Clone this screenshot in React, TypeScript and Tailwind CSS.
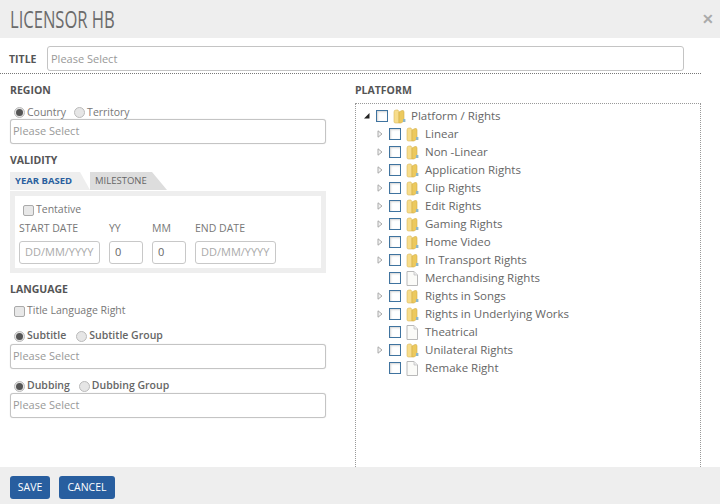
import React from "react";

const Radio = ({ on }: { on?: boolean }) => (
  <span className="w-[11px] h-[11px] rounded-full border border-[#bbbbbb] bg-[#e6e6e6] flex items-center justify-center shrink-0">
    {on && <span className="w-[7px] h-[7px] rounded-full bg-[#555555]" />}
  </span>
);

const Check = () => (
  <span className="w-[11px] h-[11px] rounded-[2px] border border-[#aaaaaa] bg-[#e8e8e8] shrink-0" />
);

const Select = () => (
  <div className="h-[25px] w-[316px] border border-[#c4c4c4] rounded-[3px] bg-white pl-[2px] flex items-center text-[11px] text-[#999999] shadow-[0_0_1px_#cccccc]">
    Please Select
  </div>
);

const Heading = ({ children }: { children: React.ReactNode }) => (
  <div className="text-[10.5px] font-bold text-[#555555] leading-[14px]">{children}</div>
);

const Folder = () => (
  <svg width="13" height="15" viewBox="0 0 13 15" className="shrink-0">
    <path d="M1 3 Q1 1 3 1 L5 1 L6 3 L6 14 L2.5 14 Q1 14 1 12.5 Z" fill="#f7dd8c" stroke="#dcbb5a" strokeWidth="0.6" />
    <path d="M6 3 L9 1.5 Q11 1 11 3 L11 12 L8 14 L6 14 Z" fill="#ecc95e" stroke="#d3ae48" strokeWidth="0.6" />
    <rect x="10" y="10" width="2.4" height="3" fill="#8fb7c9" />
  </svg>
);

const FileIcon = () => (
  <svg width="12" height="15" viewBox="0 0 12 15" className="shrink-0">
    <path d="M1 .5 H8 L11.5 4 V14.5 H1 Z" fill="#fbfbf8" stroke="#b9b9b9" strokeWidth="1" />
    <path d="M8 .5 V4 H11.5" fill="#ececec" stroke="#c4c4c4" strokeWidth="0.8" />
  </svg>
);

const TreeCheck = () => (
  <span className="block w-[12px] h-[12px] border border-[#3f739f] bg-white shadow-[inset_1px_1px_2px_#d5d5d5] shrink-0" />
);

const items: [string, boolean][] = [
  ["Linear", true],
  ["Non -Linear", true],
  ["Application Rights", true],
  ["Clip Rights", true],
  ["Edit Rights", true],
  ["Gaming Rights", true],
  ["Home Video", true],
  ["In Transport Rights", true],
  ["Merchandising Rights", false],
  ["Rights in Songs", true],
  ["Rights in Underlying Works", true],
  ["Theatrical", false],
  ["Unilateral Rights", true],
  ["Remake Right", false],
];

const DateBox = ({ w, text, dark }: { w: string; text: string; dark?: boolean }) => (
  <div className={`${w} h-[23px] border border-[#c8c8c8] rounded-[3px] bg-white flex items-center pl-[5px] text-[11px] ${dark ? "text-[#666666]" : "text-[#aaaaaa]"}`}>
    {text}
  </div>
);

export default function App() {
  return (
    <div className="w-[720px] h-[504px] bg-white flex flex-col overflow-hidden text-[#777777] font-['Open_Sans',sans-serif]">
      <div className="h-[38px] bg-[#eeeeee] flex items-center justify-between pl-[10px] pr-[6px] shrink-0">
        <span className="text-[24px] text-[#6b6b6b] font-normal inline-block origin-left scale-x-[0.69] whitespace-nowrap leading-none">LICENSOR HB</span>
        <span className="text-[14px] font-bold text-[#aaaaaa] leading-none">✕</span>
      </div>

      <div className="flex-1 flex flex-col min-h-0">
        <div className="w-[701px] h-[36px] border-b border-dotted border-[#777777] pl-[9px] pt-[8px] flex items-start gap-[8px]">
          <span className="text-[10.5px] font-bold text-[#555555] leading-[14px] mt-[6px] w-[30px]">TITLE</span>
          <div className="w-[637px] h-[25px] border border-[#c4c4c4] rounded-[3px] flex items-center pl-[3px] pt-[1px] text-[11px] text-[#999999]">Please Select</div>
        </div>

        <div className="flex flex-1 min-h-0">
          <div className="w-[355px] pl-[10px] pt-[9px] shrink-0">
            <Heading>REGION</Heading>
            <div className="flex items-center mt-[9px] h-[13px] text-[10.5px] pl-[4px]">
              <Radio on /><span className="ml-[2px]">Country</span>
              <span className="ml-[8px] flex items-center"><Radio /><span className="ml-[2px]">Territory</span></span>
            </div>
            <Select />

            <div className="mt-[9px]"><Heading>VALIDITY</Heading></div>
            <div className="flex mt-[5px] h-[18px] items-stretch">
              <div className="w-[80px] h-[18px] bg-[#eeeeee] text-[#2a5f9e] font-bold text-[9.5px] flex items-center pl-[5px] [clip-path:polygon(0_0,70px_0,100%_100%,0_100%)]">YEAR BASED</div>
              <div className="w-[77px] h-[18px] bg-[#dddddd] text-[#666666] text-[9.5px] flex items-center pl-[5px] [clip-path:polygon(0_0,62px_0,100%_100%,0_100%)]">MILESTONE</div>
            </div>
            <div className="w-[316px] h-[82px] mt-[1px] border-[5px] border-[#eeeeee] bg-white pl-[4px]">
              <div className="flex items-center h-[14px] mt-[7px] pl-[4px] text-[10.5px]">
                <Check /><span className="ml-[2px]">Tentative</span>
              </div>
              <div className="flex mt-[4px] text-[10.5px] h-[16px] items-center">
                <span className="w-[90px]">START DATE</span>
                <span className="w-[43px]">YY</span>
                <span className="w-[43px]">MM</span>
                <span>END DATE</span>
              </div>
              <div className="flex gap-[9px] mt-[4px]">
                <DateBox w="w-[81px]" text="DD/MM/YYYY" />
                <DateBox w="w-[34px]" text="0" dark />
                <DateBox w="w-[34px]" text="0" dark />
                <DateBox w="w-[81px]" text="DD/MM/YYYY" />
              </div>
            </div>

            <div className="mt-[9px]"><Heading>LANGUAGE</Heading></div>
            <div className="flex items-center mt-[8px] h-[14px] text-[10.5px] pl-[4px]">
              <Check /><span className="ml-[2px]">Title Language Right</span>
            </div>
            <div className="flex items-center mt-[11px] h-[14px] text-[10.5px] font-semibold pl-[4px] text-[#666666]">
              <Radio on /><span className="ml-[2px]">Subtitle</span>
              <span className="ml-[10px] flex items-center"><Radio /><span className="ml-[2px]">Subtitle Group</span></span>
            </div>
            <div className="mt-[1px]"><Select /></div>
            <div className="flex items-center mt-[10px] h-[14px] text-[10.5px] font-semibold pl-[4px] text-[#666666]">
              <Radio on /><span className="ml-[2px]">Dubbing</span>
              <span className="ml-[9px] flex items-center"><Radio /><span className="ml-[2px]">Dubbing Group</span></span>
            </div>
            <Select />
          </div>

          <div className="w-[346px] pt-[9px] flex flex-col shrink-0">
            <Heading>PLATFORM</Heading>
            <div className="flex-1 mt-[6px] border border-b-0 border-dotted border-[#999999] pt-[3px] text-[11.5px] text-[#666666]">
              <div className="h-[18px] flex items-center pl-[8px]">
                <svg width="6" height="6" viewBox="0 0 6 6" className="shrink-0"><path d="M0 5.5 L5.5 5.5 L5.5 0 Z" fill="#222222" /></svg>
                <span className="ml-[6px] flex"><TreeCheck /></span>
                <span className="ml-[5px] flex"><Folder /></span>
                <span className="ml-[5px]">Platform / Rights</span>
              </div>
              {items.map(([name, folder]) => (
                <div key={name} className="h-[18px] flex items-center pl-[21px]">
                  <span className="w-[6px] shrink-0 flex">
                    {folder && (
                      <svg width="6" height="8" viewBox="0 0 6 8"><path d="M1 .8 L5 4 L1 7.2 Z" fill="#f4f4f4" stroke="#aaaaaa" strokeWidth="1" /></svg>
                    )}
                  </span>
                  <span className="ml-[6px] flex"><TreeCheck /></span>
                  <span className="ml-[5px] w-[13px] flex">{folder ? <Folder /> : <FileIcon />}</span>
                  <span className="ml-[6px]">{name}</span>
                </div>
              ))}
            </div>
          </div>
        </div>
      </div>

      <div className="h-[37px] bg-[#eeeeee] flex items-start pt-[9px] pl-[10px] gap-[9px] shrink-0">
        <div className="w-[40px] h-[23px] rounded-[3px] bg-[#285e9f] text-white text-[10.5px] flex items-center justify-center">SAVE</div>
        <div className="w-[56px] h-[23px] rounded-[3px] bg-[#285e9f] text-white text-[10.5px] flex items-center justify-center">CANCEL</div>
      </div>
    </div>
  );
}
